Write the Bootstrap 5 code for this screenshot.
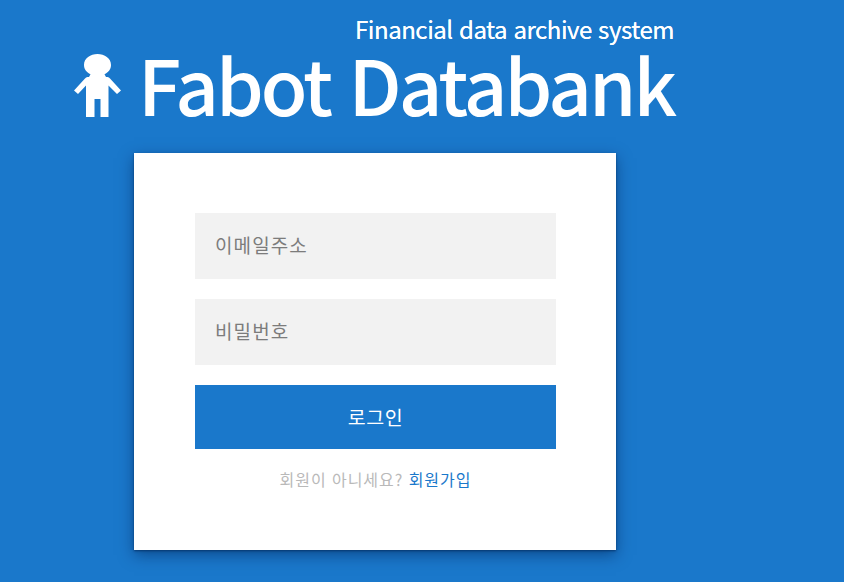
<!DOCTYPE html>
<html lang="ko">
<head>
<meta charset="utf-8">
<title>Fabot Databank</title>
<link href="https://cdn.jsdelivr.net/npm/bootstrap@5.3.0/dist/css/bootstrap.min.css" rel="stylesheet">
<style>
html,body{height:100%;}
body{background:#1a78cb;font-family:"Noto Sans CJK KR","Noto Sans",sans-serif;overflow:hidden;}
.stage{width:844px;height:582px;}
.brand-box{width:602px;margin-left:73px;height:153px;}
.brand-sub{color:#fff;font-size:24px;font-weight:400;line-height:34px;letter-spacing:-.46px;padding-top:12px;padding-right:1px;text-align:right;text-shadow:0 0 .6px #fff;}
.brand-row{height:80px;}
.brand-icon{width:48px;height:70px;flex:none;margin-top:4px;}
.brand-name{color:#fff;font-size:76px;font-weight:500;line-height:75px;letter-spacing:-2.9px;white-space:nowrap;margin-left:17px;}
.login-panel{width:482px;height:397px;margin-left:134px;padding:60px 60px 60px 61px;background:#fff;border-radius:0;border:0;box-shadow:0 1px 2px rgba(0,40,90,.7),0 5px 14px rgba(0,30,80,.5);}
.field-input{height:66px;background:#f2f2f2;border:0;border-radius:0;padding:0 20px 3px;font-size:19px;letter-spacing:1.1px;color:#555;margin-bottom:20px;}
.field-input::placeholder{color:#7c7c7c;opacity:1;}
.login-btn{height:64px;background:#1a78cb;border:0;border-radius:0;color:#fff;font-size:19.5px;letter-spacing:.6px;width:100%;}
.login-btn:hover{background:#1a78cb;color:#fff;}
.signup-line{margin-top:19px;font-size:16px;line-height:22px;letter-spacing:.95px;color:#b9b9b9;text-align:center;}
.signup-line a{color:#1a78cb;text-decoration:none;}
</style>
</head>
<body>
<div class="stage">
  <header class="brand-box">
    <div class="brand-sub">Financial data archive system</div>
    <div class="brand-row d-flex align-items-start">
      <svg class="brand-icon" viewBox="0 0 48 70" aria-hidden="true">
        <path fill="#fff" d="M24.500 4C31.500 4 38 8 38 15C38 19 35.500 22.500 31.500 24.200L33 27H34.500Q36 27 37 28.500L48 40.500L44 44L35.500 35.500V67H27.500V49H21.500V67H13V35.500L5 44L1 40.500L12 28.500Q13 27 14.500 27H16L17.500 24.200C13.500 22.500 11 19 11 15C11 8 17.500 4 24.500 4Z"/>
      </svg>
      <div class="brand-name flex-grow-1">Fabot Databank</div>
    </div>
  </header>
  <main class="card login-panel">
    <form>
      <input class="form-control field-input" type="text" placeholder="이메일주소">
      <input class="form-control field-input" type="password" placeholder="비밀번호">
      <button class="btn login-btn" type="button">로그인</button>
      <p class="signup-line mb-0">회원이 아니세요? <a href="#">회원가입</a></p>
    </form>
  </main>
</div>
<script src="https://cdn.jsdelivr.net/npm/bootstrap@5.3.0/dist/js/bootstrap.bundle.min.js"></script>
</body>
</html>
